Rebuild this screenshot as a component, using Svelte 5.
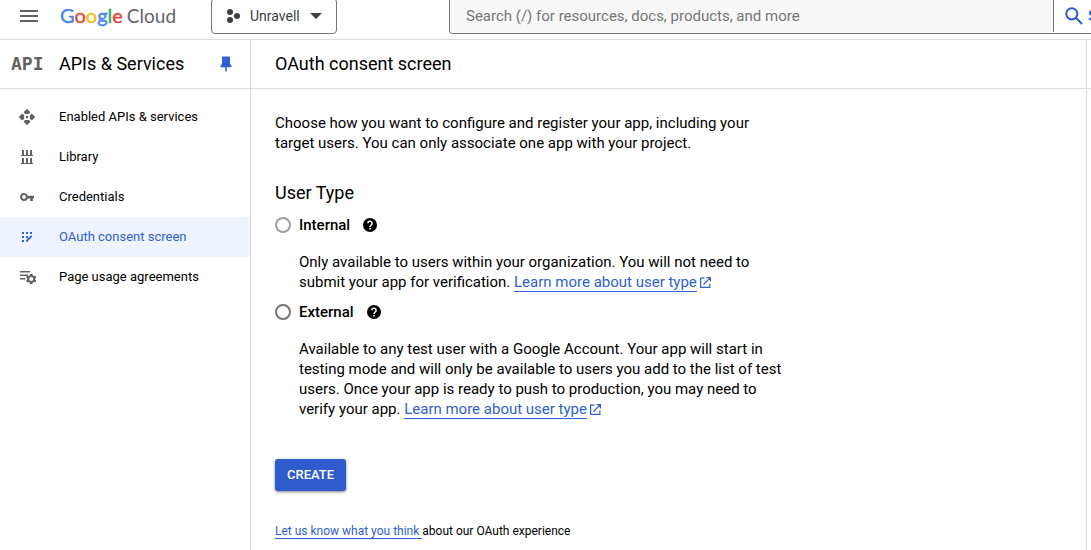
<script>
  const logo = [
    ['G', '#4285f4'],
    ['o', '#ea4335'],
    ['o', '#fbbc05'],
    ['g', '#4285f4'],
    ['l', '#34a853'],
    ['e', '#ea4335']
  ];

  const nav = [
    { label: 'Enabled APIs & services', icon: 'api' },
    { label: 'Library', icon: 'library' },
    { label: 'Credentials', icon: 'key' },
    { label: 'OAuth consent screen', icon: 'consent', active: true },
    { label: 'Page usage agreements', icon: 'agreements' }
  ];

  const userTypes = [
    {
      id: 'internal',
      label: 'Internal',
      muted: true,
      text: 'Only available to users within your organization. You will not need to submit your app for verification.'
    },
    {
      id: 'external',
      label: 'External',
      muted: false,
      text: 'Available to any test user with a Google Account. Your app will start in testing mode and will only be available to users you add to the list of test users. Once your app is ready to push to production, you may need to verify your app.'
    }
  ];

  let selected = $state('');
</script>

<div class="page">
  <header class="topbar">
    <button class="menu" aria-label="Main menu">
      <svg width="18" height="12" viewBox="0 0 18 12"><path d="M0 1h18M0 6h18M0 11h18" stroke="#5f6368" stroke-width="2" /></svg>
    </button>
    <a class="logo" href="#home">
      <span class="brand">{#each logo as [letter, color]}<span style="color: {color}">{letter}</span>{/each}</span>
      <span>Cloud</span>
    </a>
    <button class="project">
      <svg width="14" height="14" viewBox="0 0 14 14" fill="#3c4043">
        <circle cx="4" cy="3" r="3" /><circle cx="4" cy="11" r="3" /><circle cx="11" cy="7" r="3" />
      </svg>
      <span>Unravell</span>
      <svg width="12" height="6" viewBox="0 0 12 6"><path d="M0 0h12L6 6z" fill="#3c4043" /></svg>
    </button>
    <form class="search">
      <input type="search" aria-label="Search" placeholder="Search (/) for resources, docs, products, and more" />
      <button type="button">
        <svg width="18" height="18" viewBox="0 0 18 18" fill="none" stroke="#2a5bd0" stroke-width="2">
          <circle cx="6.8" cy="6.8" r="5.6" /><path d="M11 11l6 6" />
        </svg>
        <span>Search</span>
      </button>
    </form>
  </header>

  <div class="body">
    <aside>
      <div class="product">
        <span class="api">API</span>
        <h2>APIs &amp; Services</h2>
        <button class="pin" aria-label="Unpin">
          <svg width="12" height="16" viewBox="0 0 12 16" fill="#2f5fd0"><path d="M3 .5h6a1 1 0 0 1 1 1v6.300L11.500 10v1.200H6.800v4.300H5.200v-4.300H.5V10L2 7.800V1.500a1 1 0 0 1 1-1z" /></svg>
        </button>
      </div>
      <nav>
        {#each nav as item}
          <a href="#{item.icon}" class:active={item.active}>
            <svg width="18" height="18" viewBox="0 0 18 18" fill="currentColor">
              {#if item.icon === 'api'}
                <path d="M9 1l3.200 3.200-1.400 1.900L9 4.800 7.200 6.100 5.800 4.200zM9 17l3.200-3.200-1.400-1.900L9 13.200l-1.800-1.300-1.400 1.900zM1 9l3.200-3.200 1.900 1.400L4.800 9l1.300 1.800-1.900 1.400zM17 9l-3.200-3.200-1.900 1.400L13.200 9l-1.300 1.800 1.900 1.400z" />
                <path d="M9 1l3.200 3.200-1.400 1.900H7.200L5.800 4.200zM9 17l3.200-3.200-1.400-1.900H7.200l-1.400 1.900zM1 9l3.200-3.200 1.900 1.400v3.600l-1.900 1.400zM17 9l-3.200-3.200-1.900 1.400v3.600l1.900 1.400z" />
                <circle cx="9" cy="9" r="1.300" />
              {:else if item.icon === 'library'}
                <path d="M4 2h2v5h2V2h2v5h2V2h2v5h1v1H3V7h1zM4 10h2v5h2v-5h2v5h2v-5h2v5h1v1H3v-1h1z" />
              {:else if item.icon === 'key'}
                <path fill-rule="evenodd" d="M6 5a4 4 0 0 1 3.800 2.700H16v2.800h-1.200V13h-2.600v-2.500H9.800A4 4 0 1 1 6 5zm0 2.100a1.900 1.900 0 1 0 0 3.800 1.900 1.900 0 0 0 0-3.800z" />
              {:else if item.icon === 'consent'}
                <path d="M4 4h2v2H4zM8 4h2v2H8zM12 4h2v2h-2zM4 8h2v2H4zM8 8h2v2H8zM4 12h2v2H4z" />
                <path d="M8.200 14v-1.900L13.100 7.200l1.300 1.300L9.700 13.200V14z" />
              {:else}
                <path d="M2 3h10v1.500H2zM2 6.500h8V8H2zM2 10h5.500v1.500H2z" />
                <path fill-rule="evenodd" d="M12 6h2.400l.4 1.400 1 .5 1.400-.4 1.100 2-1 1v1l1 1-1.100 2-1.400-.4-1 .5-.4 1.400H12l-.4-1.400-1-.5-1.400.4-1.100-2 1-1v-1l-1-1 1.100-2 1.400.4 1-.5zm1.200 3a2 2 0 1 0 0 4 2 2 0 0 0 0-4z" />
              {/if}
            </svg>
            <span>{item.label}</span>
          </a>
        {/each}
      </nav>
    </aside>

    <main>
      <div class="title"><h1>OAuth consent screen</h1></div>
      <div class="content">
        <p>Choose how you want to configure and register your app, including your target users. You can only associate one app with your project.</p>
        <h3>User Type</h3>
        {#each userTypes as type}
          <div class="option" class:muted={type.muted}>
            <input type="radio" id={type.id} name="user-type" value={type.id} bind:group={selected} />
            <label for={type.id}>{type.label}</label>
            <button class="help" aria-label="About {type.label}">
              <svg width="14" height="14" viewBox="0 0 14 14">
                <circle cx="7" cy="7" r="7" />
                <path d="M4.900 5.300a2.100 2.100 0 1 1 3.400 1.600C7.500 7.500 7 7.800 7 8.900" fill="none" stroke="#fff" stroke-width="1.500" />
                <path d="M6.200 10h1.600v1.600H6.200z" fill="#fff" />
              </svg>
            </button>
          </div>
          <p class="detail">
            {type.text}
            <a class="more" href="#user-type">Learn more about user type</a><svg class="external" width="11" height="11" viewBox="0 0 11 11" fill="none" stroke="#2f5fd0" stroke-width="1.200"><path d="M4.500 1.100H.6v9.300h9.300V6.500M6.500.6h3.900v3.900M10.200.8L3.500 7.500" /></svg>
          </p>
        {/each}
        <button class="create">CREATE</button>
        <p class="feedback"><a href="#feedback">Let us know what you think&nbsp;</a>about our OAuth experience</p>
      </div>
    </main>
    <div class="gutter"></div>
  </div>
</div>

<style>
  :global(body) { margin: 0; background: #fff; }
  .page {
    display: flex;
    flex-direction: column;
    min-height: 100vh;
    overflow: hidden;
    color: #000;
    font: 15px/20px Roboto, sans-serif;
  }
  h1, h2, h3, p { margin: 0; }
  h1, h2, h3 { font-size: 18px; line-height: 24px; font-weight: 400; }
  svg { display: block; flex: none; }
  a { color: #2f5fd0; text-decoration: none; }
  button { font: inherit; background: none; border: 0; padding: 0; cursor: pointer; }

  .topbar {
    display: flex;
    align-items: flex-end;
    height: 34px;
    padding: 0 0 5px 20px;
    border-bottom: 1px solid #dadce0;
  }
  .menu { align-self: flex-start; padding: 10px 0; width: 18px; }
  .logo {
    display: flex;
    align-items: baseline;
    gap: 4px;
    width: 151px;
    padding-left: 22px;
    color: #5f6368;
    font: 19px/36px Lato, sans-serif;
    white-space: nowrap;
  }
  .brand { font-size: 20px; -webkit-text-stroke: 0.4px; }
  .project {
    display: flex;
    align-items: center;
    box-sizing: border-box;
    width: 126px;
    height: 36px;
    padding: 0 14px;
    border: 1px solid #747980;
    border-radius: 4px;
    color: #3c4043;
    font-size: 14px;
  }
  .project span { margin: 0 10px; }
  .search {
    display: flex;
    flex: 1;
    min-width: 0;
    box-sizing: border-box;
    height: 36px;
    margin-left: 112px;
    border: solid #747775;
    border-width: 1px 0 1px 1px;
    border-radius: 4px 0 0 4px;
    overflow: hidden;
  }
  .search input {
    flex: 1;
    min-width: 0;
    padding: 0 16px;
    border: 0;
    background: #f8f8f8;
    color: #202124;
    font: inherit;
  }
  .search input::placeholder { color: #757575; opacity: 1; }
  .search button {
    display: flex;
    align-items: center;
    gap: 5px;
    width: 38px;
    height: 33px;
    padding-left: 11px;
    border-left: 1px solid #747775;
    color: #2a5bd0;
    font-weight: 500;
    overflow: hidden;
  }

  .body { display: flex; flex: 1; }
  aside { flex: none; width: 250px; border-right: 1px solid #dadce0; }
  .product, .title {
    display: flex;
    align-items: center;
    height: 48px;
    border-bottom: 1px solid #dadce0;
  }
  .product { padding: 0 18px 0 11px; }
  .api { width: 48px; color: #616161; font: bold 18px/24px "DejaVu Sans Mono", monospace; }
  .product h2 { flex: 1; }
  nav { padding-top: 8px; }
  nav a {
    display: flex;
    align-items: center;
    gap: 23px;
    height: 40px;
    padding-left: 18px;
    color: #5f6368;
    font-size: 13px;
  }
  nav a span { color: #000; }
  nav a.active { background: #eef3fe; color: #2f5fd0; }
  nav a.active span { color: #2f5fd0; }

  main { flex: 1; min-width: 0; }
  .title { padding-left: 24px; }
  .content { max-width: 512px; padding: 24px 24px 8px; }
  .content h3 { margin: 28px 0 8px; }
  .option { display: flex; align-items: center; height: 24px; }
  .option input {
    appearance: none;
    box-sizing: border-box;
    width: 16px;
    height: 16px;
    margin: 0 8px 0 0;
    border: 2px solid #757575;
    border-radius: 50%;
  }
  .option.muted input { border-color: #9e9e9e; }
  .option input:checked { background: radial-gradient(#2f5fd0 45%, #fff 50%); }
  .option label { font-weight: 500; }
  .help { margin-left: 13px; }
  .detail { padding: 15px 0 8px 24px; }
  .more, .feedback a { border-bottom: 1px solid #2f5fd0; }
  .external { display: inline-block; margin-left: 3px; vertical-align: -1px; }
  .create {
    height: 32px;
    margin: 32px 0 30px;
    padding: 0 12px;
    border-radius: 3px;
    background: #2f5bcc;
    box-shadow: 0 1px 3px rgba(0, 0, 0, 0.5);
    color: #fff;
    font-size: 13px;
    font-weight: 500;
  }
  .feedback { font-size: 12px; }
  .gutter { flex: none; width: 4px; border-left: 1px solid #dadce0; }
  .gutter::before { content: ""; display: block; height: 48px; border-bottom: 1px solid #dadce0; }
</style>
